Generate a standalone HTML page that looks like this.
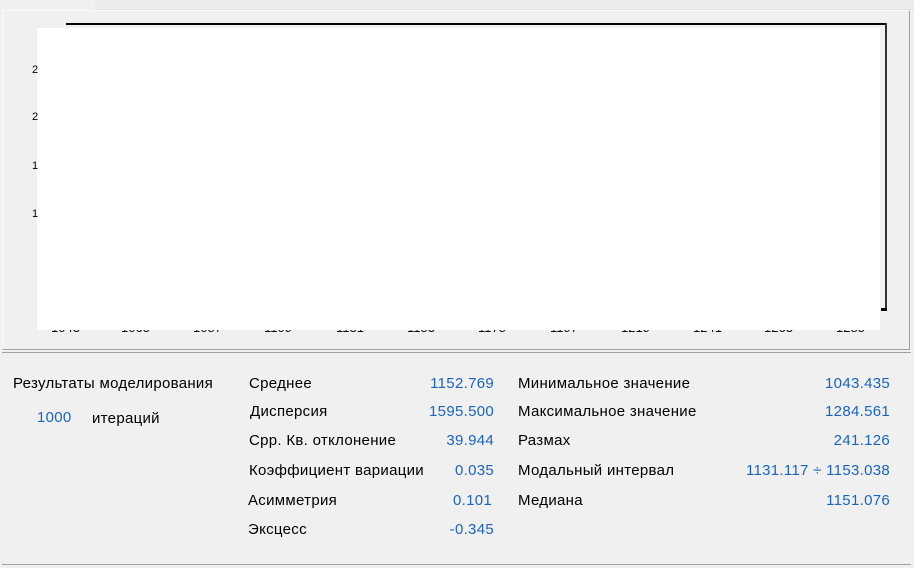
<!DOCTYPE html>
<html><head><meta charset="utf-8"><style>
body{margin:0;width:914px;height:568px;background:#f0f0f0;position:relative;overflow:hidden;font-family:"Liberation Sans",sans-serif;font-size:15px;letter-spacing:0.3px;color:#000}
.a{position:absolute;white-space:nowrap}
.b{color:#1a64c0}
.r{text-align:right}
.t{position:absolute;top:320px;font-size:13px;letter-spacing:0;color:#111}
</style></head><body>
<div class="a" style="left:95px;top:0;width:819px;height:9px;background:#ececec;border-bottom:1px solid #e2e2e2"></div>
<div class="a" style="left:2px;top:10px;width:908px;height:340px;border:1px solid #fafafa;border-right-color:#a0a0a0;border-bottom:1px solid #a0a0a0;box-sizing:border-box"></div>
<div class="a" style="left:66px;top:23px;width:820px;height:2px;background:#000"></div>
<div class="a" style="left:885px;top:23px;width:2px;height:288px;background:#333"></div>
<div class="a" style="left:881px;top:308px;width:6px;height:3px;background:#000"></div>
<span class="t" style="left:51px">1043</span><span class="t" style="left:121px">1065</span><span class="t" style="left:193px">1087</span><span class="t" style="left:264px">1109</span><span class="t" style="left:336px">1131</span><span class="t" style="left:407px">1153</span><span class="t" style="left:478px">1175</span><span class="t" style="left:550px">1197</span><span class="t" style="left:621px">1219</span><span class="t" style="left:693px">1241</span><span class="t" style="left:764px">1263</span><span class="t" style="left:836px">1285</span>
<div class="a" style="left:37px;top:28px;width:843px;height:302px;background:#fff"></div>
<div class="a" style="left:32px;top:64px;font-size:11px">2</div>
<div class="a" style="left:32px;top:111px;font-size:11px">2</div>
<div class="a" style="left:32px;top:160px;font-size:11px">1</div>
<div class="a" style="left:32px;top:208px;font-size:11px">1</div>
<div class="a" style="left:2px;top:352px;width:909px;height:213px;border-top:1px solid #a0a0a0;border-bottom:1px solid #a0a0a0;box-sizing:border-box"></div>
<div class="a" style="left:13px;top:375px">Результаты моделирования</div>
<div class="a b" style="left:37px;top:409px">1000</div>
<div class="a" style="left:92px;top:410px">итераций</div>
<div class="a" style="left:249px;top:375px">Среднее</div>
<div class="a" style="left:250px;top:403px">Дисперсия</div>
<div class="a" style="left:249px;top:432px">Срр. Кв. отклонение</div>
<div class="a" style="left:249px;top:462px">Коэффициент вариации</div>
<div class="a" style="left:248px;top:492px">Асимметрия</div>
<div class="a" style="left:248px;top:521px">Эксцесс</div>
<div class="a b r" style="right:420px;top:375px">1152.769</div>
<div class="a b r" style="right:420px;top:403px">1595.500</div>
<div class="a b r" style="right:420px;top:432px">39.944</div>
<div class="a b r" style="right:420px;top:462px">0.035</div>
<div class="a b r" style="right:422px;top:492px">0.101</div>
<div class="a b r" style="right:420px;top:521px">-0.345</div>
<div class="a" style="left:518px;top:375px">Минимальное значение</div>
<div class="a" style="left:518px;top:403px">Максимальное значение</div>
<div class="a" style="left:518px;top:432px">Размах</div>
<div class="a" style="left:518px;top:462px">Модальный интервал</div>
<div class="a" style="left:518px;top:492px">Медиана</div>
<div class="a b r" style="right:24px;top:375px">1043.435</div>
<div class="a b r" style="right:24px;top:403px">1284.561</div>
<div class="a b r" style="right:24px;top:432px">241.126</div>
<div class="a b r" style="right:24px;top:462px">1131.117 ÷ 1153.038</div>
<div class="a b r" style="right:24px;top:492px">1151.076</div>
</body></html>
